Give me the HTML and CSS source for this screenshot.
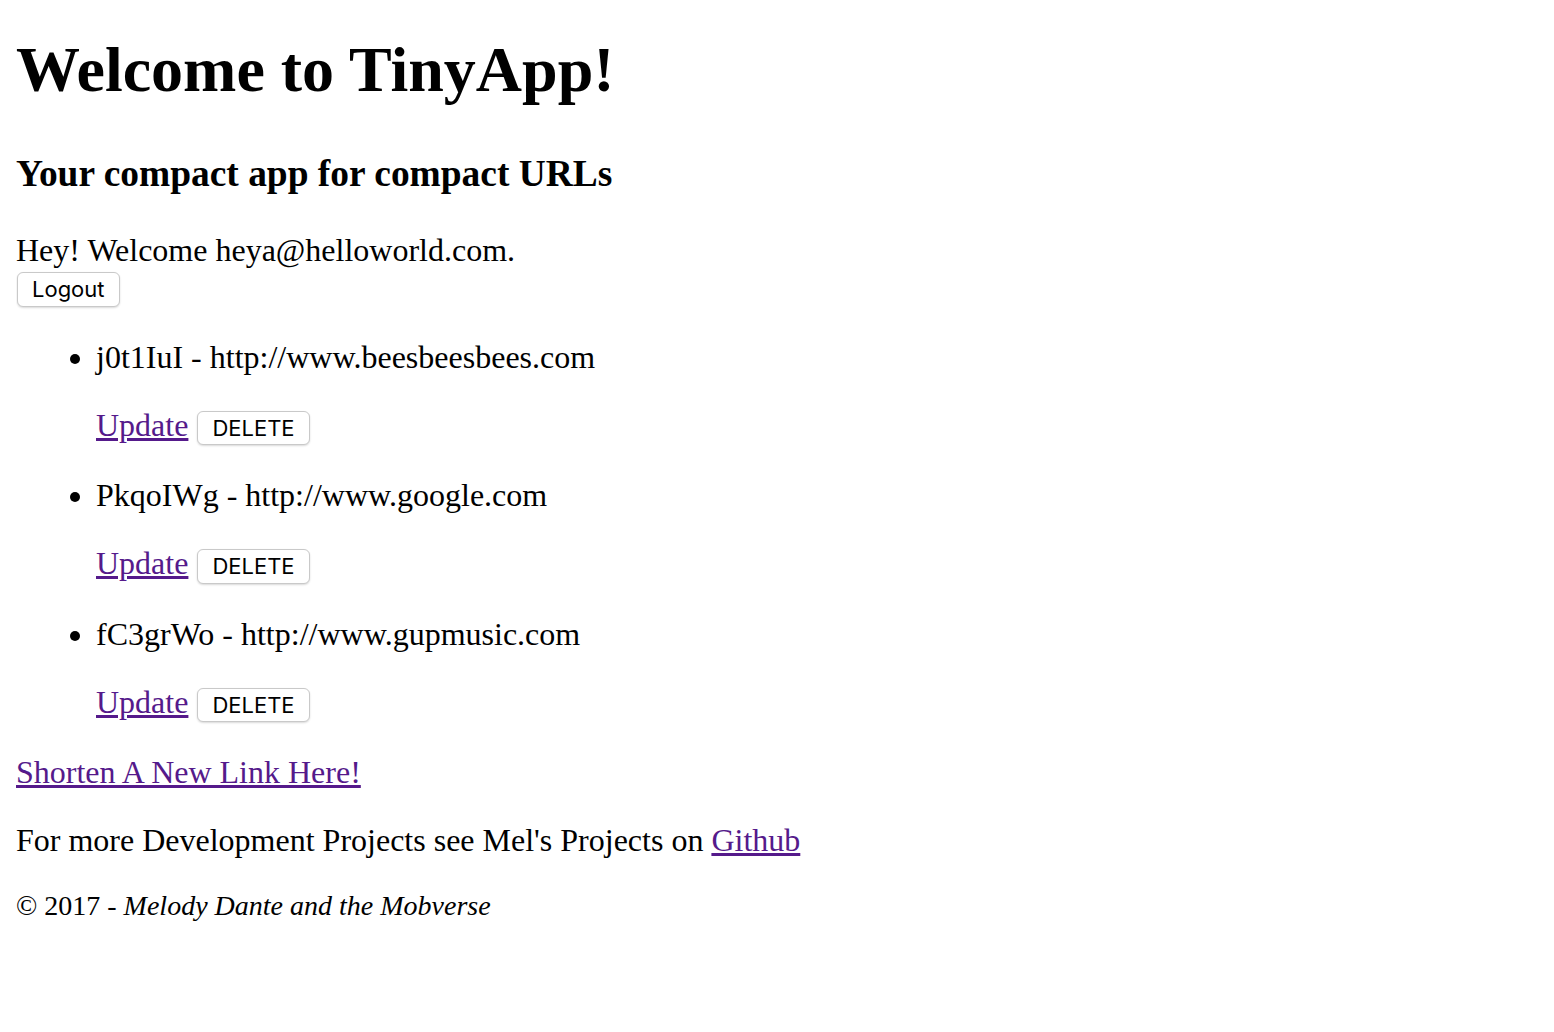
FILE: index.html
```html
<!DOCTYPE html>
<html lang="en">
<head>
<meta charset="utf-8">
<title>TinyApp</title>
<link rel="stylesheet" href="styles.css">
</head>
<body>
<h1 class="title">Welcome to TinyApp!</h1>
<h3 class="subtitle">Your compact app for compact URLs</h3>
<div class="greeting">
  <div class="greeting-text">Hey! Welcome heya@helloworld.com.</div>
  <button class="btn">Logout</button>
</div>
<ul class="urls">
  <li>j0t1IuI - http://www.beesbeesbees.com
    <p class="actions"><a class="link" href="#">Update</a> <button class="btn">DELETE</button></p>
  </li>
  <li>PkqoIWg - http://www.google.com
    <p class="actions"><a class="link" href="#">Update</a> <button class="btn">DELETE</button></p>
  </li>
  <li>fC3grWo - http://www.gupmusic.com
    <p class="actions"><a class="link" href="#">Update</a> <button class="btn">DELETE</button></p>
  </li>
</ul>
<p class="para"><a class="link" href="#">Shorten A New Link Here!</a></p>
<p class="para">For more Development Projects see Mel's Projects on <a class="link" href="#">Github</a></p>
<footer class="footer">© 2017 - <em>Melody Dante and the Mobverse</em></footer>
</body>
</html>
```

FILE: styles.css
```css
html {
  background: #fff;
}
body {
  margin: 16px;
  font-family: "Liberation Serif", "Times New Roman", serif;
  font-size: 32px;
  line-height: 1.125;
  color: #000;
}
.title {
  font-size: 64px;
  font-weight: bold;
  margin: 18px 0 46.88px;
}
.subtitle {
  font-size: 37.44px;
  font-weight: bold;
  margin: 37.44px 0;
}
.greeting {
  margin: 0;
}
.btn {
  font-family: Inter, "Liberation Sans", Arial, sans-serif;
  font-size: 22px;
  line-height: 1.2;
  color: #000;
  background: #fff;
  border: 1px solid #c9c9c9;
  border-radius: 6px;
  box-shadow: 0 1px 2px rgba(0, 0, 0, 0.15);
  padding: 3px 14px;
  margin: 0 0 0 1px;
}
.urls {
  margin: 32px 0;
  padding-left: 80px;
}
.actions {
  margin: 32px 0;
}
.link {
  color: #551a8b;
}
.para {
  margin: 32px 0;
}
.footer {
  font-size: 28px;
}
```
